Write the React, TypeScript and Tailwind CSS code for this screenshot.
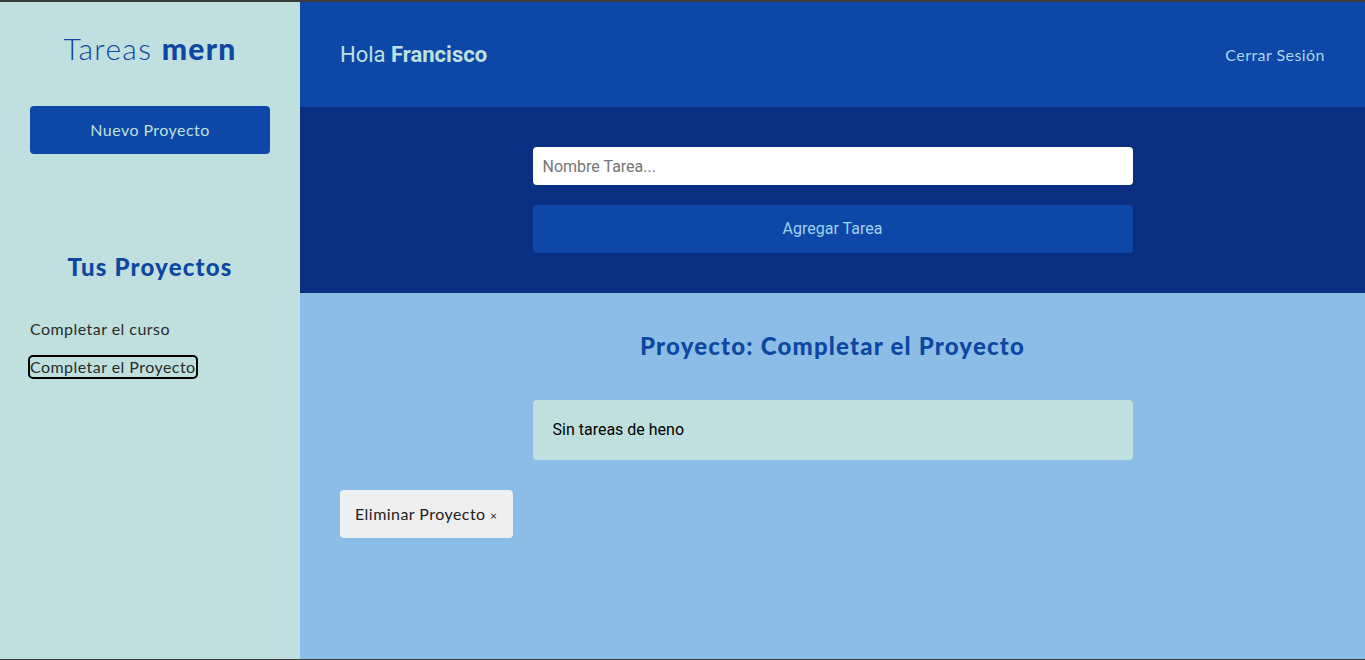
import { useState } from "react";

const PROYECTOS = ["Completar el curso", "Completar el Proyecto"];

export default function App() {
  const [activo, setActivo] = useState(1);
  const [tarea, setTarea] = useState("");

  return (
    <div className="h-[660px] w-full border-t-2 border-b border-[#3b3b3b] flex font-['Lato',sans-serif] tracking-[0.45px] overflow-hidden">
      {/* Sidebar */}
      <aside className="w-[300px] shrink-0 bg-[#bfe0df] px-[30px] pt-[28px]">
        <h1 className="text-center text-[30px] leading-[36px] tracking-[1.3px] text-[#0d47a1]">
          <span className="font-light">Tareas </span>
          <span className="font-black">mern</span>
        </h1>
        <button className="mt-[40px] w-full h-[48px] rounded bg-[#0d47a8] text-[#bfe0df] text-[16px]">
          Nuevo Proyecto
        </button>

        <div className="mt-[98px]">
          <h2 className="text-center text-[24px] leading-[30px] font-black tracking-[1.2px] text-[#0d47a1]">
            Tus Proyectos
          </h2>
          <ul className="mt-[37px] flex flex-col gap-[18px]">
            {PROYECTOS.map((p, i) => (
              <li key={p} className="leading-[20px]">
                <button
                  onClick={() => setActivo(i)}
                  className={[
                    "text-[16px] leading-[20px] text-[#2b2b2b]",
                    activo === i ? "outline-2 outline-black rounded-[3px]" : "",
                  ].join(" ")}
                >
                  {p}
                </button>
              </li>
            ))}
          </ul>
        </div>
      </aside>

      {/* Main */}
      <main className="flex-1 flex flex-col">
        <header className="h-[105px] shrink-0 bg-[#0d47a8] flex items-center justify-between px-[40px]">
          <p className="text-[22px] tracking-normal text-[#bfe0df] font-['Roboto',sans-serif]">
            Hola <span className="font-bold">Francisco</span>
          </p>
          <button className="text-[16px] text-[#a9d6ea]">Cerrar Sesión</button>
        </header>

        <section className="h-[186px] shrink-0 bg-[#0a2f80] pt-[40px] flex justify-center">
          <form
            className="w-[600px] flex flex-col gap-[20px]"
            onSubmit={(e) => e.preventDefault()}
          >
            <input
              value={tarea}
              onChange={(e) => setTarea(e.target.value)}
              placeholder="Nombre Tarea..."
              className="h-[38px] w-full rounded bg-white px-[10px] text-[16px] tracking-normal font-['Roboto',sans-serif] text-[#333] placeholder:text-[#757575] outline-none"
            />
            <button className="h-[48px] w-full rounded bg-[#0d47a8] text-[16px] tracking-normal text-[#9fd2ee] font-['Roboto',sans-serif]">
              Agregar Tarea
            </button>
          </form>
        </section>

        <section className="flex-1 bg-[#8bbde6] px-[40px] pt-[38px]">
          <h2 className="text-center text-[24px] leading-[30px] font-black tracking-[1.2px] text-[#0d47a1]">
            Proyecto: Completar el Proyecto
          </h2>
          <ul className="mt-[39px] mx-auto w-[600px]">
            <li className="h-[60px] rounded bg-[#bfe0df] px-[20px] flex items-center text-[16px] tracking-normal text-black font-['Roboto',sans-serif]">
              Sin tareas de heno
            </li>
          </ul>
          <button className="mt-[30px] h-[48px] px-[15px] rounded bg-[#efefef] text-[16px] text-[#222]">
            Eliminar Proyecto <span className="text-[12px]">&times;</span>
          </button>
        </section>
      </main>
    </div>
  );
}
